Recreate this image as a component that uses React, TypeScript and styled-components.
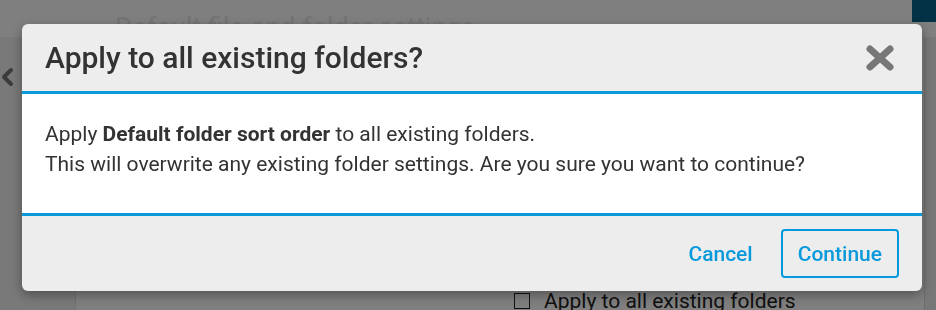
import styled, { createGlobalStyle } from "styled-components"

const GlobalStyle = createGlobalStyle`
html, body {
margin: 0;
padding: 0;
}
body {
font-family: Roboto, "Liberation Sans", sans-serif;
overflow: hidden;
}
`

const Page = styled.div`
width: 936px;
height: 310px;
display: flex;
flex-direction: column;
background: #ffffff;
overflow: hidden;
`

const TopBar = styled.div`
height: 37px;
display: flex;
align-items: flex-start;
justify-content: space-between;
background: #fefefe;
flex-shrink: 0;
`

const PageTitle = styled.span`
margin: 12px 0 0 115px;
font-size: 27px;
color: #e8e8e8;
`

const AccountSquare = styled.div`
width: 24px;
height: 22px;
background: #0a9fe0;
filter: brightness(0.62);
`

const Content = styled.div`
flex: 1;
display: flex;
`

const Sidebar = styled.div`
width: 75px;
border-right: 1px solid #e2e2e2;
background: #f2f2f2;
padding-top: 30px;
`

const BackChevron = styled.span`
display: block;
width: 14px;
color: #777;
`

const Main = styled.div`
flex: 1;
display: flex;
flex-direction: column;
justify-content: flex-end;
padding-left: 438px;
`

const CheckRow = styled.label`
display: flex;
align-items: center;
gap: 14px;
font-size: 21px;
line-height: 24px;
color: #222;
margin-bottom: -3px;
`

const CheckBox = styled.span`
width: 14px;
height: 14px;
border: 1px solid #222;
background: #fff;
`

const RightRail = styled.div`
width: 11px;
background: #f0f0f0;
border-left: 1px solid #dcdcdc;
`

const Overlay = styled.div`
position: fixed;
inset: 0;
background: rgba(0, 0, 0, 0.5);
padding: 24px 0 0 22px;
`

const Dialog = styled.div`
width: 900px;
background: #ededed;
border-radius: 6px;
box-shadow: 0 4px 12px rgba(0, 0, 0, 0.35);
overflow: hidden;
`

const Header = styled.div`
height: 67px;
display: flex;
align-items: center;
justify-content: space-between;
padding: 0 28px 0 23px;
border-bottom: 3px solid #0799dc;
`

const Title = styled.h2`
margin: 0;
font-size: 30px;
font-weight: 500;
color: #333;
`

const CloseButton = styled.button`
border: none;
background: none;
padding: 0;
display: flex;
cursor: pointer;
`

const Body = styled.div`
background: #ffffff;
padding: 25px 23px 34px;
border-bottom: 3px solid #0799dc;
`

const Line = styled.p`
margin: 0;
font-size: 21px;
line-height: 30px;
color: #333;
`

const Footer = styled.div`
height: 75px;
display: flex;
align-items: center;
justify-content: flex-end;
gap: 11px;
padding: 0 23px;
`

const ActionButton = styled.button<{ $outlined?: boolean }>`
height: 49px;
padding: 0 15px;
font-family: Roboto, "Liberation Sans", sans-serif;
font-size: 21px;
font-weight: 500;
color: #0799dc;
background: transparent;
border: 2px solid ${(p) => (p.$outlined ? "#0799dc" : "transparent")};
border-radius: 4px;
cursor: pointer;
`

function CloseIcon() {
    return (
        <svg width="28" height="26" viewBox="0 0 28 26">
            <path d="M4 4 L24 22 M24 4 L4 22" stroke="#777" strokeWidth="7" strokeLinecap="round" />
        </svg>
    )
}

function Chevron() {
    return (
        <svg width="14" height="20" viewBox="0 0 14 20">
            <path d="M11 3 L4 10 L11 17" stroke="#777" strokeWidth="4" fill="none" strokeLinecap="round" strokeLinejoin="round" />
        </svg>
    )
}

export default function App() {
    return (
        <>
            <GlobalStyle />
            <Page>
                <TopBar>
                    <PageTitle>Default file and folder settings</PageTitle>
                    <AccountSquare />
                </TopBar>
                <Content>
                    <Sidebar>
                        <BackChevron><Chevron /></BackChevron>
                    </Sidebar>
                    <Main>
                        <CheckRow>
                            <CheckBox />
                            Apply to all existing folders
                        </CheckRow>
                    </Main>
                    <RightRail />
                </Content>
            </Page>
            <Overlay>
                <Dialog>
                    <Header>
                        <Title>Apply to all existing folders?</Title>
                        <CloseButton aria-label="Close"><CloseIcon /></CloseButton>
                    </Header>
                    <Body>
                        <Line>Apply <b>Default folder sort order</b> to all existing folders.</Line>
                        <Line>This will overwrite any existing folder settings. Are you sure you want to continue?</Line>
                    </Body>
                    <Footer>
                        <ActionButton>Cancel</ActionButton>
                        <ActionButton $outlined>Continue</ActionButton>
                    </Footer>
                </Dialog>
            </Overlay>
        </>
    )
}
